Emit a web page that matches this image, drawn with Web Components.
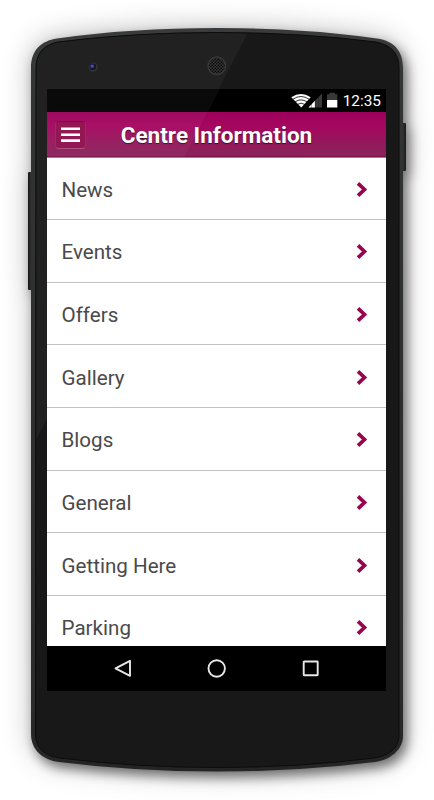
<!DOCTYPE html>
<html lang="en">
<head>
<meta charset="utf-8">
<title>Centre Information</title>
<style>
    body {
        margin: 0;
        background: #fff;
        font-family: Roboto, "Liberation Sans", sans-serif;
        overflow: hidden;
    }
</style>
</head>
<body>
<phone-frame>
    <status-bar data-time="12:35"></status-bar>
    <title-bar>Centre Information</title-bar>
    <menu-list></menu-list>
    <nav-bar></nav-bar>
</phone-frame>

<script>
class PhoneFrame extends HTMLElement {
    constructor() {
        super();
        this.attachShadow({ mode: 'open' });
    }

    connectedCallback() {
        this.shadowRoot.innerHTML = `
            <style>
                :host {
                    display: block;
                    position: relative;
                    box-sizing: border-box;
                    width: 434px;
                    height: 800px;
                    padding: 89px 48px 109px 47px;
                    overflow: hidden;
                }
                svg {
                    position: absolute;
                    left: 0;
                    top: 0;
                    pointer-events: none;
                }
                .body {
                    filter: drop-shadow(4px 6px 6px rgba(0, 0, 0, .5)) drop-shadow(-1px -2px 13px rgba(0, 0, 0, .24));
                }
                .screen {
                    position: relative;
                    display: flex;
                    flex-direction: column;
                    height: 602px;
                    background: #000;
                    overflow: hidden;
                }
            </style>
            <svg class="body" width="434" height="800" viewBox="0 0 434 800">
                <defs>
                    <linearGradient id="key" x1="0" x2="1" y1="0" y2="0">
                        <stop offset="0" stop-color="#161616"/>
                        <stop offset=".5" stop-color="#303030"/>
                        <stop offset="1" stop-color="#1b1b1b"/>
                    </linearGradient>
                    <linearGradient id="rim" x1="0" x2="0" y1="0" y2="1">
                        <stop offset="0" stop-color="#3a3b3c"/>
                        <stop offset=".1" stop-color="#323333"/>
                        <stop offset=".9" stop-color="#2b2b2b"/>
                        <stop offset="1" stop-color="#242424"/>
                    </linearGradient>
                    <pattern id="mesh" width="3" height="3" patternUnits="userSpaceOnUse">
                        <circle cx=".8" cy=".8" r=".8" fill="#060606"/>
                        <circle cx="2.3" cy="2.3" r=".8" fill="#060606"/>
                    </pattern>
                    <clipPath id="face">
                        <path d="M36 68C36 53 44 45 58 42Q132 32.500 217 32.500T376 42C391 45 399 53 399 68V735C399 748 389 756 374 758Q300 767.500 217 767.500T60 758C45 756 35.500 748 35.500 734Z"/>
                    </clipPath>
                </defs>
                <rect x="28" y="172" width="6" height="118" rx="1" fill="url(#key)"/>
                <rect x="400" y="123" width="6" height="48" rx="1" fill="url(#key)"/>
                <path fill="url(#rim)" d="M31 68C31 50 41 41 57 38.500Q130 28 217 28T377 38.500C395 41 403 52 403 68V736C403 749 391 760 375 762Q300 771.500 217 771.500T59 762C43 760 31 750 31 734Z"/>
                <g clip-path="url(#face)">
                    <rect width="434" height="800" fill="#181818"/>
                    <path fill="#212121" d="M0 0H265L35 442H0Z"/>
                </g>
                <path fill="none" stroke="#0c0c0c" d="M36 68C36 53 44 45 58 42Q132 32.500 217 32.500T376 42C391 45 399 53 399 68V735C399 748 389 756 374 758Q300 767.500 217 767.500T60 758C45 756 35.500 748 35.500 734Z"/>
                <circle cx="93.300" cy="67.300" r="4.700" fill="#333"/>
                <circle cx="92.800" cy="66.800" r="3.300" fill="#171720"/>
                <circle cx="92.200" cy="66.300" r="2" fill="#34349a"/>
                <circle cx="92" cy="66" r=".7" fill="#8083d0"/>
                <circle cx="216.800" cy="65.800" r="9" fill="#343434" stroke="#3c3c3c"/>
                <circle cx="216.800" cy="65.800" r="8" fill="url(#mesh)"/>
            </svg>
            <div class="screen"><slot></slot></div>
            <svg width="434" height="800" viewBox="0 0 434 800">
                <path fill="#fff" fill-opacity=".04" d="M47 89H220L184 157H47Z"/>
            </svg>
        `;
    }
}

class StatusBar extends HTMLElement {
    constructor() {
        super();
        this.attachShadow({ mode: 'open' });
    }

    connectedCallback() {
        this.shadowRoot.innerHTML = `
            <style>
                :host {
                    display: flex;
                    flex: none;
                    justify-content: flex-end;
                    align-items: center;
                    box-sizing: border-box;
                    height: 23px;
                    padding: 1px 5px 0 0;
                    gap: 4px;
                    background: #000;
                    color: #fff;
                    font-size: 15.4px;
                    line-height: 22px;
                }
                svg {
                    flex: none;
                    display: block;
                }
            </style>
            <svg width="48" height="22" viewBox="291 90 48 22">
                <path fill="#fff" d="M291.300 97.200Q301 90.800 310.700 97.200L301.300 107.600Z"/>
                <path fill="none" stroke="#000" stroke-width=".8" d="M292.800 99.300Q301 93.700 309.200 99.300M295 101.900Q301 97.800 307 101.900M297.400 104.400Q301 102 304.800 104.400"/>
                <path fill="#3a3a3a" d="M322 93.500V107.500H308.500Z"/>
                <path fill="#fff" d="M315 100.800V107.500H308.500Z"/>
                <path stroke="#000" stroke-opacity=".4" stroke-width=".7" d="M311.500 101V108M315.200 98V108M318.700 94V108"/>
                <path fill="#383838" d="M329.500 92.700H335V94.300H337.300V100H327V94.300H329.500Z"/>
                <path fill="#fff" d="M327 100H337.300V107.500H327Z"/>
            </svg>
            <span>${this.dataset.time}</span>
        `;
    }
}

class TitleBar extends HTMLElement {
    constructor() {
        super();
        this.attachShadow({ mode: 'open' });
    }

    connectedCallback() {
        this.shadowRoot.innerHTML = `
            <style>
                :host {
                    display: grid;
                    flex: none;
                    grid-template-columns: 32px 1fr 32px;
                    align-items: center;
                    box-sizing: border-box;
                    height: 46px;
                    padding: 0 8px;
                    border-bottom: 1px solid #b67598;
                    background: linear-gradient(#9c005b, #a5065f 30%, #8c205a 88%, #8b235b 97%, #7d104b 98%);
                    color: #fff;
                }
                button {
                    display: grid;
                    place-items: center;
                    box-sizing: border-box;
                    width: 31px;
                    height: 28px;
                    padding: 0;
                    border: 1px solid;
                    border-color: #74043e #982659 #ab4b7b;
                    border-radius: 4px;
                    background: #8f0e4d;
                }
                h1 {
                    margin: 0;
                    padding-top: 1px;
                    font-size: 22.5px;
                    font-weight: 700;
                    line-height: 28px;
                    text-align: center;
                    white-space: nowrap;
                    text-shadow: 0 1px 1px rgba(0, 0, 0, .6);
                }
            </style>
            <button aria-label="Menu">
                <svg width="19" height="16" viewBox="0 0 19 16"><path stroke="#fff" stroke-width="2.600" d="M0 1.800H19M0 7.700H19M0 13.600H19"/></svg>
            </button>
            <h1><slot></slot></h1>
        `;
    }
}

class MenuRow extends HTMLElement {
    constructor() {
        super();
        this.attachShadow({ mode: 'open' });
    }

    connectedCallback() {
        this.shadowRoot.innerHTML = `
            <style>
                :host {
                    display: flex;
                    flex: none;
                    justify-content: space-between;
                    align-items: center;
                    box-sizing: border-box;
                    height: 62.7px;
                    padding: 3px 18px 0 14.5px;
                    border-bottom: 1px solid #c2c2c2;
                    color: #4a4a4a;
                    font-size: 20.6px;
                    line-height: 28px;
                }
                :host(:first-of-type) {
                    height: 62px;
                    padding-top: 2px;
                }
            </style>
            <span>${this.dataset.label}</span>
            <svg width="12" height="18" viewBox="0 0 12 18"><path fill="none" stroke="#97054f" stroke-width="3.700" d="M2 2.300 8.500 8.500 2 14.700"/></svg>
        `;
    }
}

class MenuList extends HTMLElement {
    constructor() {
        super();
        this.attachShadow({ mode: 'open' });
        this.items = ['News', 'Events', 'Offers', 'Gallery', 'Blogs', 'General', 'Getting Here', 'Parking'];
    }

    connectedCallback() {
        this.shadowRoot.innerHTML = `
            <style>
                :host {
                    display: flex;
                    flex: 1;
                    flex-direction: column;
                    min-height: 0;
                    background: #fff;
                    overflow: hidden;
                }
            </style>
            ${this.items.map(item => `<menu-row data-label="${item}"></menu-row>`).join('')}
        `;
    }
}

class NavBar extends HTMLElement {
    constructor() {
        super();
        this.attachShadow({ mode: 'open' });
    }

    connectedCallback() {
        this.shadowRoot.innerHTML = `
            <style>
                :host {
                    display: flex;
                    flex: none;
                    justify-content: center;
                    align-items: center;
                    gap: 74px;
                    height: 45px;
                    background: #000;
                }
                svg {
                    fill: none;
                    stroke: #e8e8e8;
                    stroke-width: 1.9;
                }
            </style>
            <svg width="20" height="20" viewBox="0 0 20 20"><path stroke-linejoin="round" d="M17 1.800V16.800L2.500 9.300Z"/></svg>
            <svg width="20" height="20" viewBox="0 0 20 20"><circle cx="9.700" cy="9.500" r="8.200"/></svg>
            <svg width="20" height="20" viewBox="0 0 20 20"><rect x="2.700" y="2.500" width="14" height="13.800" rx=".5"/></svg>
        `;
    }
}

window.customElements.define('phone-frame', PhoneFrame);
window.customElements.define('status-bar', StatusBar);
window.customElements.define('title-bar', TitleBar);
window.customElements.define('menu-row', MenuRow);
window.customElements.define('menu-list', MenuList);
window.customElements.define('nav-bar', NavBar);
</script>
</body>
</html>
